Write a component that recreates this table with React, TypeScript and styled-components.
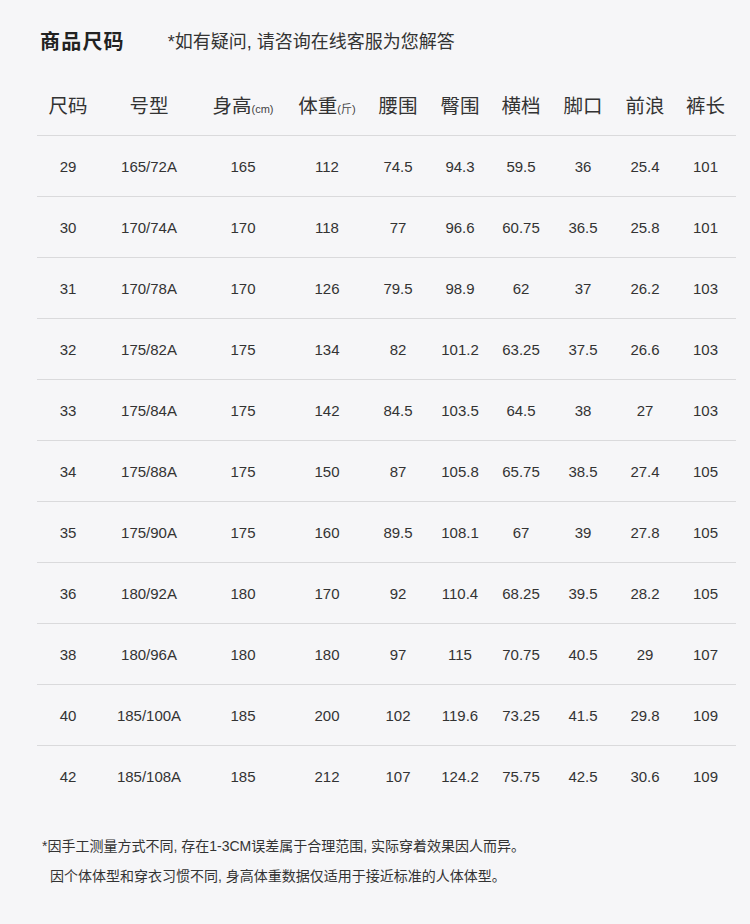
import styled, { createGlobalStyle } from 'styled-components';

const GlobalStyle = createGlobalStyle`
  html, body {
    margin: 0;
    padding: 0;
    background: #f6f6f8;
  }
  body {
    font-family: 'Liberation Sans', 'Noto Sans CJK SC', sans-serif;
    color: #333;
  }
`;

const columns = '62px 100px 88px 80px 62px 62px 60px 64px 60px 61px';

const Page = styled.div`
  width: 750px;
  height: 924px;
  box-sizing: border-box;
  padding-top: 25px;
  background: #f6f6f8;
  overflow: hidden;
`;

const TitleBar = styled.div`
  display: flex;
  align-items: center;
  padding-left: 40px;
  height: 30px;
  margin-bottom: 20px;
`;

const Title = styled.h1`
  margin: 0;
  font-size: 20px;
  font-weight: 700;
  color: #222;
  letter-spacing: 1.2px;
`;

const Subtitle = styled.span`
  margin-left: 43px;
  font-size: 18px;
  color: #333;
`;

const Table = styled.div`
  margin-left: 37px;
  width: 699px;
`;

const Row = styled.div<{ $last?: boolean }>`
  display: grid;
  grid-template-columns: ${columns};
  align-items: center;
  height: 60px;
  border-bottom: ${(p) => (p.$last ? 'none' : '1px solid #dadadc')};
`;

const HeadCell = styled.div`
  text-align: center;
  font-size: 19.5px;
  color: #333;
  white-space: nowrap;
  margin-top: -2px;
`;

const Unit = styled.small`
  font-size: 11px;
  color: #444;
`;

const Cell = styled.div`
  text-align: center;
  font-size: 15px;
  color: #333;
  white-space: nowrap;
`;

const Notes = styled.div`
  margin-top: 25px;
  padding-left: 42px;
  font-size: 14px;
  line-height: 30px;
  color: #333;
`;

const NoteLine = styled.p<{ $indent?: boolean }>`
  margin: 0;
  padding-left: ${(p) => (p.$indent ? '8px' : '0')};
  white-space: nowrap;
`;

const headers: [string, string?][] = [
  ['尺码'],
  ['号型'],
  ['身高', '(cm)'],
  ['体重', '(斤)'],
  ['腰围'],
  ['臀围'],
  ['横档'],
  ['脚口'],
  ['前浪'],
  ['裤长'],
];

const rows: string[][] = [
  ['29', '165/72A', '165', '112', '74.5', '94.3', '59.5', '36', '25.4', '101'],
  ['30', '170/74A', '170', '118', '77', '96.6', '60.75', '36.5', '25.8', '101'],
  ['31', '170/78A', '170', '126', '79.5', '98.9', '62', '37', '26.2', '103'],
  ['32', '175/82A', '175', '134', '82', '101.2', '63.25', '37.5', '26.6', '103'],
  ['33', '175/84A', '175', '142', '84.5', '103.5', '64.5', '38', '27', '103'],
  ['34', '175/88A', '175', '150', '87', '105.8', '65.75', '38.5', '27.4', '105'],
  ['35', '175/90A', '175', '160', '89.5', '108.1', '67', '39', '27.8', '105'],
  ['36', '180/92A', '180', '170', '92', '110.4', '68.25', '39.5', '28.2', '105'],
  ['38', '180/96A', '180', '180', '97', '115', '70.75', '40.5', '29', '107'],
  ['40', '185/100A', '185', '200', '102', '119.6', '73.25', '41.5', '29.8', '109'],
  ['42', '185/108A', '185', '212', '107', '124.2', '75.75', '42.5', '30.6', '109'],
];

export default function App() {
  return (
    <Page>
      <GlobalStyle />
      <TitleBar>
        <Title>商品尺码</Title>
        <Subtitle>*如有疑问, 请咨询在线客服为您解答</Subtitle>
      </TitleBar>

      <Table>
        <Row>
          {headers.map(([label, unit]) => (
            <HeadCell key={label}>
              {label}
              {unit && <Unit>{unit}</Unit>}
            </HeadCell>
          ))}
        </Row>
        {rows.map((r, i) => (
          <Row key={r[0]} $last={i === rows.length - 1}>
            {r.map((v, j) => (
              <Cell key={j}>{v}</Cell>
            ))}
          </Row>
        ))}
      </Table>

      <Notes>
        <NoteLine>*因手工测量方式不同, 存在1-3CM误差属于合理范围, 实际穿着效果因人而异。</NoteLine>
        <NoteLine $indent>因个体体型和穿衣习惯不同, 身高体重数据仅适用于接近标准的人体体型。</NoteLine>
      </Notes>
    </Page>
  );
}
